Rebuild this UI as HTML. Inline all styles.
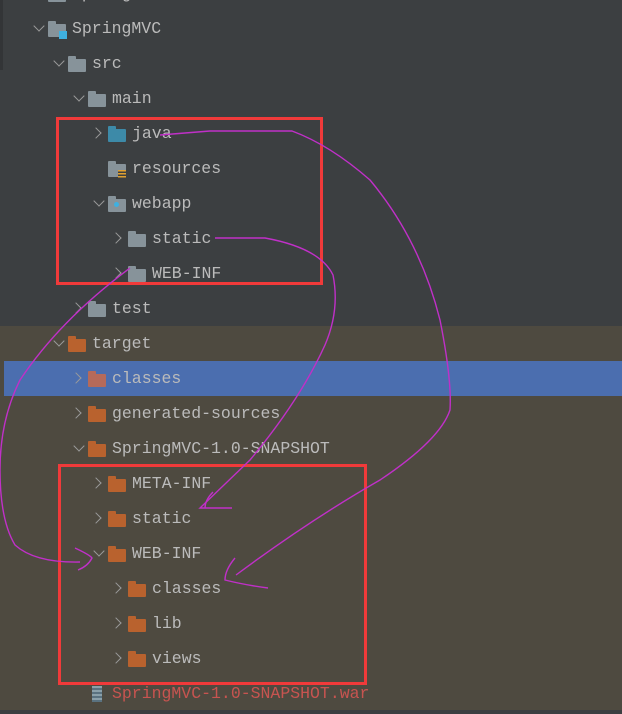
<!DOCTYPE html>
<html><head><meta charset="utf-8"><style>
body{margin:0;width:622px;height:714px;overflow:hidden;background:#3c3f41;font-family:"Liberation Mono",monospace;font-size:16.5px;color:#bbbbbb;position:relative}
.brown{position:absolute;left:0;top:326px;width:622px;height:384px;background:#4e4a40}
.bot{position:absolute;left:0;top:710px;width:622px;height:4px;background:#3c3f41}
.sel{position:absolute;left:4px;top:361px;width:618px;height:35px;background:#4b6eaf}
.row{position:absolute;height:35px;line-height:35px;white-space:nowrap}
.ar{position:absolute;width:7px;height:7px;border-right:1.6px solid #9a9a9a;border-bottom:1.6px solid #9a9a9a}
.ar.o{transform:rotate(45deg)}
.ar.c{transform:rotate(-45deg)}
.f{position:absolute;width:18px;height:13px;border-radius:1px}
.f:before{content:"";position:absolute;left:0;top:-3px;width:8px;height:4px;background:inherit;border-radius:1px 1px 0 0}
.box{position:absolute;border:3px solid #f03a3a}
</style></head><body>
<div class="brown"></div><div class="bot"></div><div class="sel"></div>
<div style="position:absolute;left:0;top:0;width:3px;height:70px;background:#333537"></div>
<div id="t"></div>
<div class="box" style="left:56px;top:117px;width:261px;height:162px"></div>
<div class="box" style="left:58px;top:464px;width:303px;height:215px"></div>
<svg width="622" height="714" style="position:absolute;left:0;top:0" fill="none" stroke="#c030c8" stroke-width="1.4">
<path d="M160 135 L210 131 L292 131 Q330 145 370 180 Q420 240 440 320 Q452 380 450 410 Q440 440 380 480 Q310 520 236 575"/>
<path d="M235 558 Q225 570 225 580 Q245 585 268 588"/>
<path d="M215 238 L265 238 Q320 248 333 275 Q340 310 325 345 Q300 400 250 460 L200 508 L232 508"/>
<path d="M213 492 Q205 500 205 508"/>
<path d="M130 268 Q60 320 20 380 Q0 420 0 470 Q0 520 15 545 Q35 563 80 562"/>
<path d="M75 548 Q90 555 92 558 Q88 566 78 570"/>
</svg>
<script>
var rows=[
[-1,0,'o','g','spring'],
[0,0,'o','p','SpringMVC'],
[1,1,'o','g','src'],
[2,2,'o','g','main'],
[3,3,'c','b','java'],
[4,3,'','r','resources'],
[5,3,'o','w','webapp'],
[6,4,'c','g','static'],
[7,4,'c','g','WEB-INF'],
[8,2,'c','g','test'],
[9,1,'o','o','target'],
[10,2,'c','s','classes'],
[11,2,'c','o','generated-sources'],
[12,2,'o','o','SpringMVC-1.0-SNAPSHOT'],
[13,3,'c','o','META-INF'],
[14,3,'c','o','static'],
[15,3,'o','o','WEB-INF'],
[16,4,'c','o','classes'],
[17,4,'c','o','lib'],
[18,4,'c','o','views'],
[19,2,'','z','SpringMVC-1.0-SNAPSHOT.war']];
var col={g:'#87939a',p:'#87939a',b:'#3d8aa8',r:'#87939a',w:'#87939a',o:'#b9622e',s:'#b56a5a'};
var h='';
rows.forEach(function(r){
 var y=11+35*r[0], l=r[1], ax=35+20*l, fx=48+20*l, tx=72+20*l;
 if(r[2]=='o')h+='<div class="ar o" style="left:'+(ax)+'px;top:'+(y+11)+'px"></div>';
 if(r[2]=='c')h+='<div class="ar c" style="left:'+(ax-3)+'px;top:'+(y+13)+'px"></div>';
 if(r[3]=='z'){h+='<div style="position:absolute;left:'+(fx+4)+'px;top:'+(y+10)+'px;width:10px;height:16px;background:repeating-linear-gradient(#8aa0aa 0 2px,#5a7280 2px 4px)"></div>';}
 else{h+='<div class="f" style="background:'+col[r[3]]+';left:'+fx+'px;top:'+(y+13)+'px"></div>';
  if(r[3]=='p')h+='<div style="position:absolute;left:'+(fx+11)+'px;top:'+(y+20)+'px;width:8px;height:8px;background:#3fb0e0"></div>';
  if(r[3]=='r')h+='<div style="position:absolute;left:'+(fx+10)+'px;top:'+(y+19)+'px;width:8px;height:9px;background:repeating-linear-gradient(#e0a030 0 1.5px,#3c3f41 1.5px 3px)"></div>';
  if(r[3]=='w')h+='<div style="position:absolute;left:'+(fx+6)+'px;top:'+(y+16)+'px;width:5px;height:5px;border-radius:50%;background:#3fb0e0"></div>';}
 var c=r[3]=='z'?'#c75450':'#bbbbbb';
 h+='<div class="row" style="left:'+tx+'px;top:'+y+'px;color:'+c+'">'+r[4]+'</div>';
});
document.getElementById('t').innerHTML=h;
</script>
</body></html>
